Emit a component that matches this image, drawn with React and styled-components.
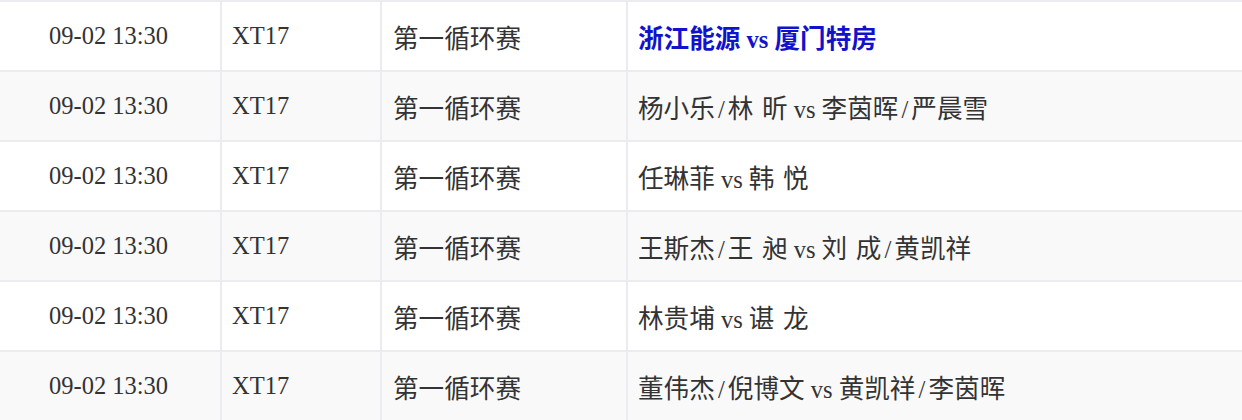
import React from 'react';
import styled, { createGlobalStyle } from 'styled-components';

const matches = [
  { time: '09-02 13:30', table: 'XT17', stage: '第一循环赛', home: '浙江能源', away: '厦门特房', team: true },
  { time: '09-02 13:30', table: 'XT17', stage: '第一循环赛', home: '杨小乐/林 昕', away: '李茵晖/严晨雪' },
  { time: '09-02 13:30', table: 'XT17', stage: '第一循环赛', home: '任琳菲', away: '韩 悦' },
  { time: '09-02 13:30', table: 'XT17', stage: '第一循环赛', home: '王斯杰/王 昶', away: '刘 成/黄凯祥' },
  { time: '09-02 13:30', table: 'XT17', stage: '第一循环赛', home: '林贵埔', away: '谌 龙' },
  { time: '09-02 13:30', table: 'XT17', stage: '第一循环赛', home: '董伟杰/倪博文', away: '黄凯祥/李茵晖' },
];

// chinese names use fixed gaps for "/" and the space between surname and given name
const Name = ({ text }) =>
  text.split(/([/ ])/).filter(Boolean).map((part, i) => {
    if (part === '/') return <Gap key={i} $w={13}>/</Gap>;
    if (part === ' ') return <Gap key={i} $w={8.5} />;
    return <Han key={i}>{part}</Han>;
  });

const App = () => (
  <>
    <GlobalStyle />
    <Schedule>
      {matches.map((m, i) => {
        const striped = i % 2 === 1;
        return (
          <Row key={i}>
            <Cell $striped={striped} $indent={49}>{m.time}</Cell>
            <Cell $striped={striped}>{m.table}</Cell>
            <Cell $striped={striped} $indent={11}>
              <Han>{m.stage}</Han>
            </Cell>
            <Cell $striped={striped}>
              <Versus $team={m.team}>
                <Name text={m.home} />
                {' vs '}
                <Name text={m.away} />
              </Versus>
            </Cell>
          </Row>
        );
      })}
    </Schedule>
  </>
);

export default App;

const GlobalStyle = createGlobalStyle`
  html, body {
    margin: 0;
    padding: 0;
    background: #fff;
    overflow: hidden;
  }
  body {
    font-family: "Liberation Serif", "Noto Sans CJK SC", serif;
    color: #333;
  }
`;

const Schedule = styled.div`
  display: grid;
  row-gap: 2px;
  padding-top: 2px;
  background: #ececf0;
  width: 1242px;
`;

const Row = styled.div`
  display: grid;
  grid-template-columns: 220px 158px 244px 1fr;
  column-gap: 2px;
  height: 68px;
`;

const Cell = styled.div`
  display: flex;
  align-items: center;
  padding-left: ${({ $indent }) => $indent || 10}px;
  font-size: 24.5px;
  background: ${({ $striped }) => ($striped ? '#f9f9f9' : '#fff')};
  white-space: nowrap;
`;

const Versus = styled.span`
  color: ${({ $team }) => ($team ? '#1212cc' : '#333')};
  font-weight: ${({ $team }) => ($team ? 700 : 400)};
`;

const Han = styled.span`
  font-family: "Noto Sans CJK SC", sans-serif;
  font-size: 25.6px;
`;

const Gap = styled.span`
  display: inline-block;
  width: ${({ $w }) => $w}px;
  text-align: center;
`;
